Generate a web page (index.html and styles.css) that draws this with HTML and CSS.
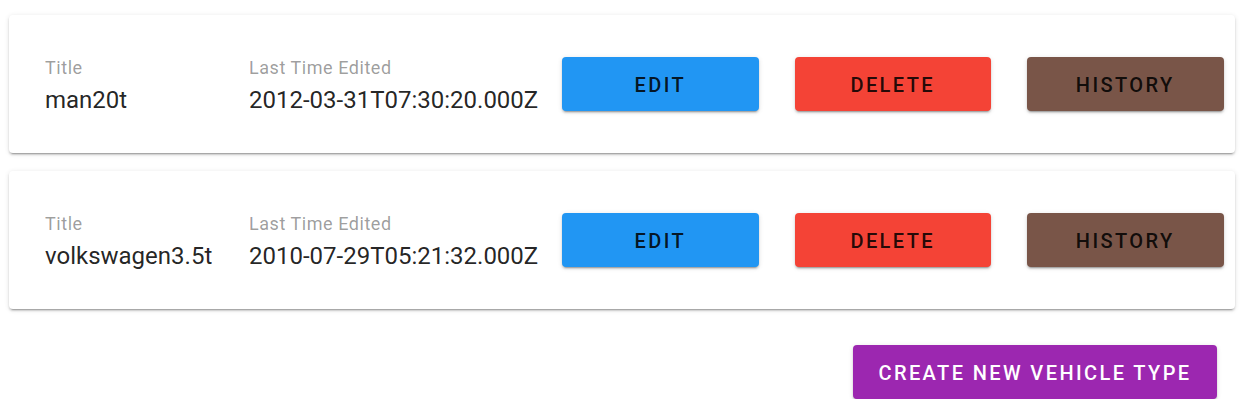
FILE: index.html
```html
<!DOCTYPE html>
<html>
<head>
<meta charset="utf-8">
<link rel="stylesheet" href="styles.css">
</head>
<body>
<div class="page">
  <div class="list">
    <div class="card">
      <div class="field f-title">
        <div class="label">Title</div>
        <div class="value">man20t</div>
      </div>
      <div class="field f-time">
        <div class="label">Last Time Edited</div>
        <div class="value">2012-03-31T07:30:20.000Z</div>
      </div>
      <div class="actions">
        <button class="btn btn-edit">Edit</button>
        <button class="btn btn-delete">Delete</button>
        <button class="btn btn-history">History</button>
      </div>
    </div>
    <div class="card">
      <div class="field f-title">
        <div class="label">Title</div>
        <div class="value">volkswagen3.5t</div>
      </div>
      <div class="field f-time">
        <div class="label">Last Time Edited</div>
        <div class="value">2010-07-29T05:21:32.000Z</div>
      </div>
      <div class="actions">
        <button class="btn btn-edit">Edit</button>
        <button class="btn btn-delete">Delete</button>
        <button class="btn btn-history">History</button>
      </div>
    </div>
  </div>
  <div class="footer">
    <button class="btn btn-create">Create new vehicle type</button>
  </div>
</div>
</body>
</html>
```

FILE: styles.css
```css
* { box-sizing: border-box; }
html, body { margin: 0; padding: 0; background: #ffffff; }
body { font-family: Roboto, "Noto Sans", "Liberation Sans", sans-serif; }

.page {
  padding: 15px 19px 0 9px;
}

.list {
  display: flex;
  flex-direction: column;
  gap: 18px;
}

.card {
  height: 138px;
  display: flex;
  align-items: center;
  padding: 0 11px 0 36px;
  background: #fff;
  border-radius: 4px;
  box-shadow: 0px 3px 1px -2px rgba(0,0,0,0.2), 0px 2px 2px 0px rgba(0,0,0,0.14), 0px 1px 5px 0px rgba(0,0,0,0.12);
}

.field { display: flex; flex-direction: column; padding-top: 5px; }
.f-title { width: 204px; }
.f-time { width: 313px; }

.label {
  font-size: 18px;
  line-height: 24px;
  color: rgba(0,0,0,0.4);
  letter-spacing: 0.55px;
}

.value {
  font-size: 24px;
  line-height: 36px;
  margin-top: 2px;
  color: rgba(0,0,0,0.87);
}

.actions {
  display: flex;
  gap: 36px;
}

.btn {
  width: 196.5px;
  height: 54px;
  border: none;
  border-radius: 4px;
  font-family: Roboto, "Noto Sans", "Liberation Sans", sans-serif;
  font-weight: 500;
  font-size: 20px;
  letter-spacing: 2.4px;
  text-transform: uppercase;
  color: rgba(0,0,0,0.87);
  padding: 2px 0 0 0;
  box-shadow: 0px 3px 1px -2px rgba(0,0,0,0.2), 0px 2px 2px 0px rgba(0,0,0,0.14), 0px 1px 5px 0px rgba(0,0,0,0.12);
}

.btn-edit { background: #2196f3; }
.btn-delete { background: #f44336; }
.btn-history { background: #795548; }

.footer {
  display: flex;
  justify-content: flex-end;
  padding: 36px 18px 0 0;
}

.btn-create {
  width: 364px;
  background: #9c27b0;
  color: #fff;
}
```
